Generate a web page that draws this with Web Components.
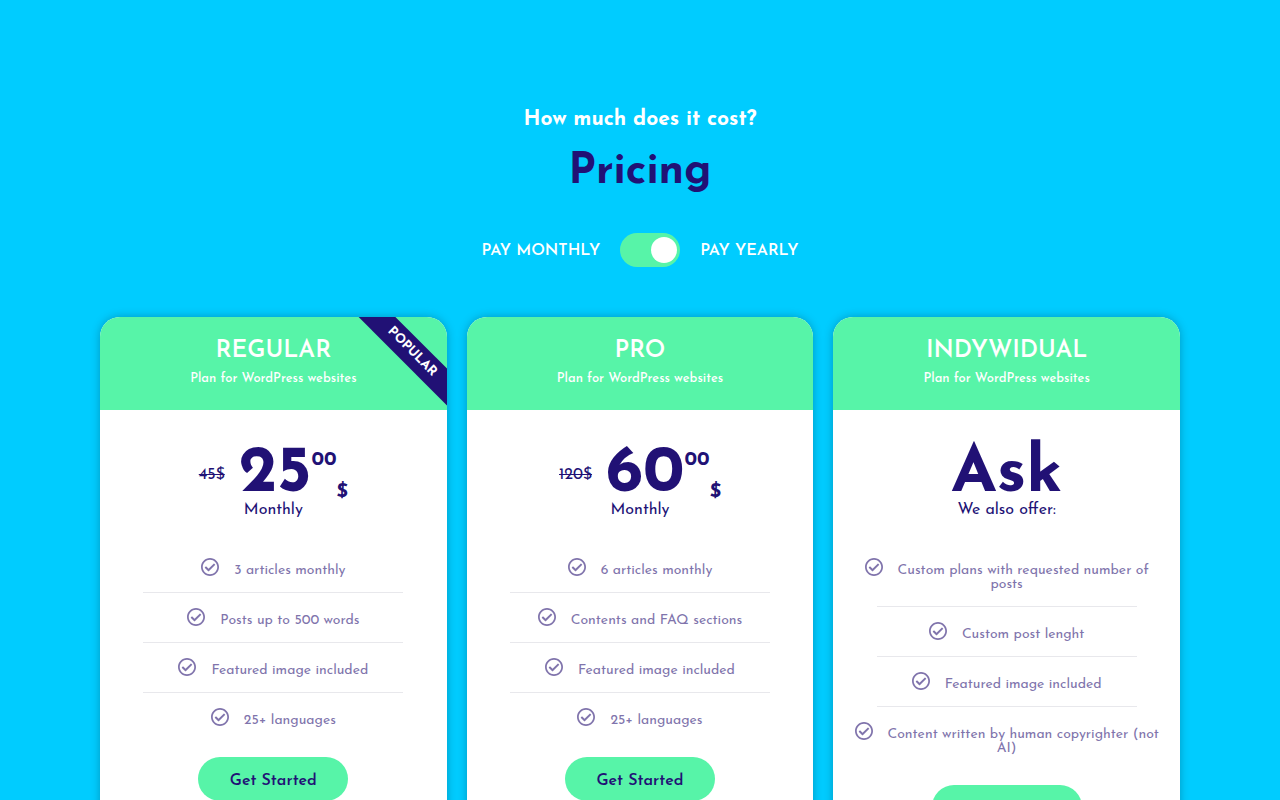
<!DOCTYPE html>
<html lang="en">
<head>
<meta charset="utf-8">
<meta name="viewport" content="width=device-width, initial-scale=1">
<title>Pricing</title>
<style>
  :root {
    --sky: #00ccff;
    --mint: #57f4a8;
    --navy: #211175;
  }
  body {
    margin: 0;
    background: var(--sky);
    color: var(--navy);
    font-family: "Josefin Sans", Lato, sans-serif;
  }
</style>
</head>
<body>
<pricing-section>
  <span slot="eyebrow">How much does it cost?</span>
  <span slot="title">Pricing</span>
  <billing-toggle slot="toggle" before="PAY MONTHLY" after="PAY YEARLY"></billing-toggle>

  <price-card name="REGULAR" old="45$" amount="25" cents="00" currency="$" period="Monthly" ribbon="POPULAR">
    <plan-feature>3 articles monthly</plan-feature>
    <plan-feature>Posts up to 500 words</plan-feature>
    <plan-feature>Featured image included</plan-feature>
    <plan-feature>25+ languages</plan-feature>
  </price-card>
  <price-card name="PRO" old="120$" amount="60" cents="00" currency="$" period="Monthly">
    <plan-feature>6 articles monthly</plan-feature>
    <plan-feature>Contents and FAQ sections</plan-feature>
    <plan-feature>Featured image included</plan-feature>
    <plan-feature>25+ languages</plan-feature>
  </price-card>
  <price-card name="INDYWIDUAL" amount="Ask" period="We also offer:">
    <plan-feature>Custom plans with requested number of posts</plan-feature>
    <plan-feature>Custom post lenght</plan-feature>
    <plan-feature>Featured image included</plan-feature>
    <plan-feature>Content written by human copyrighter (not AI)</plan-feature>
  </price-card>
</pricing-section>

<script>
class PricingSection extends HTMLElement {
    constructor() {
        super();
        this.attachShadow({ mode: 'open' });
    }

    connectedCallback() {
        this.shadowRoot.innerHTML = `
        <style>
        :host {
            display: block;
            max-width: 1080px;
            margin: 0 auto;
            padding: 106px 20px 60px;
        }
        header {
            display: flex;
            flex-direction: column;
            align-items: center;
            text-align: center;
        }
        p, h2 { margin: 0; }
        p {
            color: #fff;
            font-size: 21px;
            font-weight: 700;
            line-height: 28px;
        }
        h2 {
            margin: 13px 0 34px;
            font-size: 43px;
            font-weight: 700;
            line-height: 52px;
        }
        .cards {
            display: grid;
            grid-template-columns: repeat(auto-fit, minmax(300px, 1fr));
            gap: 20px;
            align-items: start;
            margin-top: 50px;
        }
        </style>
        <header>
            <p><slot name="eyebrow"></slot></p>
            <h2><slot name="title"></slot></h2>
            <slot name="toggle"></slot>
        </header>
        <div class="cards"><slot></slot></div>
        `;
    }
}

class BillingToggle extends HTMLElement {
    constructor() {
        super();
        this.attachShadow({ mode: 'open' });
    }

    connectedCallback() {
        this.shadowRoot.innerHTML = `
        <style>
        :host { display: block; }
        label {
            display: flex;
            gap: 20px;
            align-items: center;
            color: #fff;
            font-size: 16px;
            font-weight: 600;
            line-height: 20px;
            cursor: pointer;
        }
        span { padding-top: 2px; }
        input {
            appearance: none;
            display: flex;
            align-items: center;
            justify-content: flex-start;
            box-sizing: border-box;
            width: 60px;
            height: 34px;
            margin: 0;
            padding: 0 3px;
            border-radius: 17px;
            background: var(--mint);
            cursor: pointer;
        }
        input:checked { justify-content: flex-end; }
        input::before {
            content: "";
            width: 26px;
            height: 26px;
            border-radius: 50%;
            background: #fff;
        }
        </style>
        <label>
            <span>${this.getAttribute('before')}</span>
            <input type="checkbox" checked>
            <span>${this.getAttribute('after')}</span>
        </label>
        `;
    }
}

class PriceCard extends HTMLElement {
    constructor() {
        super();
        this.attachShadow({ mode: 'open' });
    }

    connectedCallback() {
        this.render();
    }

    // optional pieces are left out when their attribute is missing
    piece(tag, name) {
        const value = this.getAttribute(name);
        return value ? `<${tag} class="${name}">${value}</${tag}>` : '';
    }

    render() {
        this.shadowRoot.innerHTML = `
        <style>
        :host {
            display: block;
            position: relative;
            overflow: hidden;
            border-radius: 20px;
            background: #fff;
            box-shadow: 0 0 10px rgba(0, 0, 0, 0.25);
            text-align: center;
        }
        header {
            padding: 19px 20px 21px;
            background: var(--mint);
            color: #fff;
        }
        h3, p { margin: 0; }
        h3 {
            font-size: 24px;
            font-weight: 600;
            line-height: 30px;
        }
        header p {
            margin-top: 3px;
            font-size: 13px;
            font-weight: 500;
            line-height: 20px;
        }
        .ribbon {
            position: absolute;
            top: 22px;
            right: -40px;
            width: 150px;
            background: var(--navy);
            color: #fff;
            font-size: 13px;
            font-weight: 700;
            line-height: 26px;
            transform: rotate(45deg);
        }
        .price {
            display: flex;
            justify-content: center;
            height: 58px;
            margin-top: 34px;
            font-weight: 700;
        }
        .old {
            align-self: center;
            margin: 4px 14px 0 0;
            font-size: 16px;
            font-weight: 400;
            line-height: 20px;
        }
        .amount {
            font-size: 66px;
            line-height: 62px;
        }
        .cents, .currency {
            font-size: 20px;
            line-height: 20px;
        }
        .cents { margin-top: 6px; }
        .currency { margin-top: 38px; }
        .period {
            font-size: 16px;
            font-weight: 400;
            line-height: 16px;
        }
        .features {
            display: block;
            margin: 25px 0 0;
            padding: 0 18px;
        }
        footer {
            padding: 15px 20px 30px;
        }
        button {
            min-width: 150px;
            height: 44px;
            padding: 3px 30px 0;
            border: 0;
            border-radius: 22px;
            background: var(--mint);
            color: var(--navy);
            font: 600 16px/20px "Josefin Sans", Lato, sans-serif;
            cursor: pointer;
        }
        </style>
        <header>
            <h3>${this.getAttribute('name')}</h3>
            <p>Plan for WordPress websites</p>
        </header>
        ${this.piece('div', 'ribbon')}
        <div class="price">
            ${this.piece('del', 'old')}
            ${this.piece('span', 'amount')}
            ${this.piece('span', 'cents')}
            ${this.piece('span', 'currency')}
        </div>
        ${this.piece('p', 'period')}
        <div class="features" role="list"><slot></slot></div>
        <footer><button type="button">Get Started</button></footer>
        `;
    }
}

class PlanFeature extends HTMLElement {
    constructor() {
        super();
        this.attachShadow({ mode: 'open' });
    }

    connectedCallback() {
        this.setAttribute('role', 'listitem');
        this.shadowRoot.innerHTML = `
        <style>
        :host {
            display: block;
            font-size: 14px;
            font-weight: 400;
            line-height: 14px;
        }
        :host(:not(:first-of-type))::before {
            content: "";
            display: block;
            width: 260px;
            max-width: 100%;
            margin: 0 auto;
            border-top: 1px solid #e8e8ec;
        }
        div {
            padding: 15px 0 14px;
            color: #8074ac;
        }
        svg {
            width: 18px;
            height: 18px;
            margin-right: 15px;
            vertical-align: -2px;
            fill: currentColor;
        }
        </style>
        <div><svg viewBox="8 8 496 496" aria-hidden="true"><path d="M256 8C119.033 8 8 119.033 8 256s111.033 248 248 248 248-111.033 248-248S392.967 8 256 8zm0 48c110.532 0 200 89.451 200 200 0 110.532-89.451 200-200 200-110.532 0-200-89.451-200-200 0-110.532 89.451-200 200-200m140.204 130.267l-22.536-22.718c-4.667-4.705-12.265-4.736-16.97-.068L215.346 303.697l-59.792-60.277c-4.667-4.705-12.265-4.736-16.97-.069l-22.719 22.536c-4.705 4.667-4.736 12.265-.068 16.971l90.781 91.516c4.667 4.705 12.265 4.736 16.97.068l172.589-171.204c4.704-4.668 4.734-12.266.066-16.971z"/></svg><slot></slot></div>
        `;
    }
}

customElements.define('pricing-section', PricingSection);
customElements.define('billing-toggle', BillingToggle);
customElements.define('price-card', PriceCard);
customElements.define('plan-feature', PlanFeature);
</script>
</body>
</html>
